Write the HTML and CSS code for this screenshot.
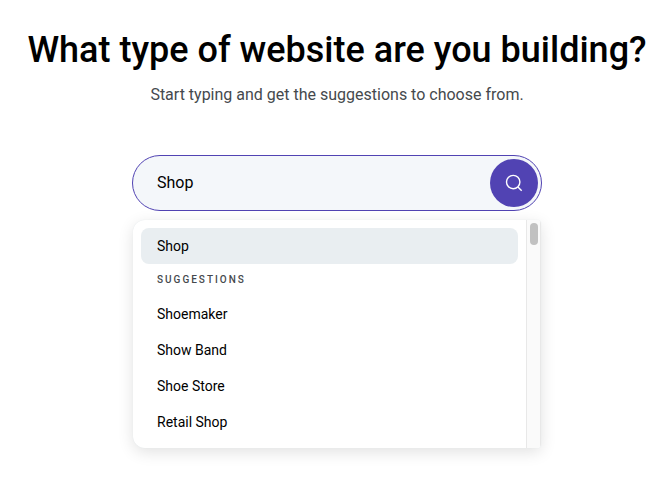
FILE: index.html
```html
<!DOCTYPE html>
<html lang="en">
<head>
<meta charset="utf-8">
<meta name="viewport" content="width=device-width, initial-scale=1">
<title>What type of website are you building?</title>
<link rel="stylesheet" href="styles.css">
</head>
<body>
<main class="page">
  <h1 class="title">What type of website are you building?</h1>
  <p class="subtitle" id="hint">Start typing and get the suggestions to choose from.</p>
  <form class="picker">
    <div class="search">
      <input class="search-input" type="text" value="Shop" aria-label="Website type" aria-describedby="hint" autocomplete="off">
      <button class="search-button" type="submit" aria-label="Search">
        <svg class="search-icon" viewBox="0 0 18 18" aria-hidden="true">
          <circle cx="8.2" cy="8.1" r="6.7"/>
          <path d="M12.9 12.9l3.8 3.8"/>
        </svg>
      </button>
    </div>
    <div class="dropdown">
      <div class="options">
        <button class="option option-active" type="button">Shop</button>
        <h2 class="group">Suggestions</h2>
        <button class="option" type="button">Shoemaker</button>
        <button class="option" type="button">Show Band</button>
        <button class="option" type="button">Shoe Store</button>
        <button class="option" type="button">Retail Shop</button>
      </div>
      <div class="scrollbar" aria-hidden="true"><div class="thumb"></div></div>
    </div>
  </form>
</main>
</body>
</html>
```
FILE: styles.css
```css
* {
  box-sizing: border-box;
}

body {
  margin: 0;
  background: #fff;
  color: #000;
  font-family: Roboto, "Liberation Sans", sans-serif;
}

.page {
  display: flex;
  flex-direction: column;
  align-items: center;
  padding: 28px 16px 38px 18px;
}

.title {
  margin: 0;
  font-size: 36px;
  font-weight: 500;
  line-height: 44px;
  text-align: center;
}

.subtitle {
  margin: 10px 0 48px;
  color: #45494d;
  font-size: 16px;
  line-height: 25px;
  text-align: center;
}

.picker {
  width: 100%;
  max-width: 410px;
}

.search {
  display: flex;
  align-items: center;
  padding: 3px 3px 3px 24px;
  border: 1px solid #5143b3;
  border-radius: 28px;
  background: #f4f7fa;
}

.search-input {
  flex: 1;
  min-width: 0;
  height: 48px;
  padding: 0 0 2px;
  border: 0;
  outline: 0;
  background: transparent;
  color: #000;
  font: inherit;
  font-size: 16px;
}

.search-button {
  display: grid;
  place-items: center;
  width: 48px;
  height: 48px;
  padding: 0;
  border: 0;
  border-radius: 50%;
  background: #5143b3;
}

.search-icon {
  width: 18px;
  height: 18px;
  fill: none;
  stroke: #fff;
  stroke-width: 1.4;
}

.dropdown {
  display: flex;
  margin: 9px 1px 0;
  overflow: hidden;
  border-radius: 12px 4px 4px 12px;
  background: #fff;
  box-shadow: 0 0 1px #dde5e8, 0 4px 16px rgba(0, 0, 0, 0.12);
}

.options {
  flex: 1;
  padding: 8px;
}

.option {
  display: block;
  width: 100%;
  height: 36px;
  padding: 0 16px;
  border: 0;
  border-radius: 8px;
  background: transparent;
  color: #000;
  font: inherit;
  font-size: 14px;
  text-align: left;
}

.option-active {
  background: #e9eef1;
}

.group {
  margin: 0;
  padding: 0 16px;
  color: #45494d;
  font-size: 10px;
  font-weight: 500;
  letter-spacing: 2px;
  line-height: 32px;
  text-transform: uppercase;
}

.scrollbar {
  width: 15px;
  padding: 3px;
  border: solid #e8e8e8;
  border-width: 0 1px;
  background: #fafafa;
}

.thumb {
  width: 8px;
  height: 22px;
  border-radius: 4px;
  background: #c1c1c1;
}
```
